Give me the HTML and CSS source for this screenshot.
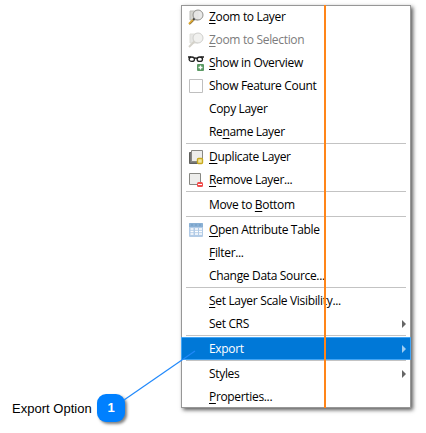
FILE: index.html
```html
<!DOCTYPE html>
<html lang="en">
<head>
<meta charset="utf-8">
<title>Layer menu</title>
<link rel="stylesheet" href="styles.css">
</head>
<body>
<main class="scene">
  <div class="callout">
    <span class="caption">Export Option</span>
    <span class="badge">1</span>
  </div>
  <nav class="menu">
    <div class="item"><svg class="icon" viewBox="0 0 16 16"><path d="M2 2h8v9H2z" fill="#d5d5d0" stroke="#bdbdb8"/><circle cx="10" cy="6" r="5" fill="#e7e7e5" fill-opacity=".9" stroke="#92928e"/><path d="M6.5 9.5L5 11" stroke="#444" stroke-width="2"/><path d="M5 11l-4 4" stroke="#dca62c" stroke-width="2.2"/><path d="M5.8 11.5l-4 4" stroke="#665335" stroke-width=".7"/></svg><span class="label"><u>Z</u>oom to Layer</span></div>
    <div class="item disabled"><svg class="icon" viewBox="0 0 16 16"><path d="M2 2h8v9H2z" fill="#e7e7e5" stroke="#deded9"/><circle cx="10" cy="6" r="5" fill="#f1f1ef" stroke="#cfcfcc"/><path d="M6.5 9.5L1 15" stroke="#d4d1c9" stroke-width="2"/></svg><span class="label"><u>Z</u>oom to Selection</span></div>
    <div class="item"><svg class="icon" viewBox="0 0 16 16"><g fill="none" stroke="#222" stroke-width="1.3"><ellipse cx="3.8" cy="4.2" rx="2.7" ry="2.2"/><ellipse cx="11.8" cy="4.2" rx="2.7" ry="2.2"/><path d="M0 2h3M6.5 3.5q1.3-1 2.6 0M12.5 2H16"/></g><rect x="9" y="9" width="7" height="7" rx="1" fill="#5b9a64"/><path d="M12.5 10.5v4M10.5 12.5h4" stroke="#fff" stroke-width="1.3"/></svg><span class="label"><u>S</u>how in Overview</span></div>
    <div class="item"><svg class="icon" viewBox="0 0 16 16"><path d="M1.5 1.5h13v13h-13z" fill="#fff" stroke="#bfbfbf"/></svg><span class="label">Show Feature Count</span></div>
    <div class="item"><span class="icon"></span><span class="label">Copy Layer</span></div>
    <div class="item"><span class="icon"></span><span class="label">Re<u>n</u>ame Layer</span></div>
    <div class="separator"></div>
    <div class="item"><svg class="icon" viewBox="0 0 16 16"><path d="M1.5 3.5h10v11h-10z" fill="#777" stroke="#60605c"/><path d="M3.5 1.5h11v11h-11z" fill="#ededeb" stroke="#888883"/><rect x="9.5" y="9.5" width="5" height="5" rx="1" fill="#f2e79e" stroke="#c8a920" stroke-width="1.4"/></svg><span class="label"><u>D</u>uplicate Layer</span></div>
    <div class="item"><svg class="icon" viewBox="0 0 16 16"><path d="M1.5 1.5h11v11h-11z" fill="#ededeb" stroke="#888883"/><rect x="9" y="10" width="6" height="5" rx="1.5" fill="#f04c4c"/><path d="M10 12.5h4" stroke="#fff"/></svg><span class="label"><u>R</u>emove Layer...</span></div>
    <div class="separator"></div>
    <div class="item"><span class="icon"></span><span class="label">Move to <u>B</u>ottom</span></div>
    <div class="separator"></div>
    <div class="item"><svg class="icon" viewBox="0 0 16 16"><rect x="1" y="1" width="14" height="14" rx="1" fill="#b2cbe6"/><path d="M1 2q0-1 1-1h12q1 0 1 1v3H1z" fill="#8ab0d4"/><path d="M3 3h2M7 3h2M11 3h2" stroke="#6e9ac4"/><path d="M2.5 7h3M2.5 9.5h3M2.5 12h3M7 7h3M7 9.5h3M7 12h3M11 7h3M11 9.5h3M11 12h3" stroke="#fff" stroke-width="1.3"/></svg><span class="label"><u>O</u>pen Attribute Table</span></div>
    <div class="item"><span class="icon"></span><span class="label"><u>F</u>ilter...</span></div>
    <div class="item"><span class="icon"></span><span class="label">Change Data Source...</span></div>
    <div class="separator"></div>
    <div class="item"><span class="icon"></span><span class="label"><u>S</u>et Layer Scale Visibility...</span></div>
    <div class="item"><span class="icon"></span><span class="label">Set CRS</span><span class="arrow"></span></div>
    <div class="separator"></div>
    <div class="item selected"><span class="icon"></span><span class="label">Export</span><span class="arrow"></span></div>
    <div class="separator"></div>
    <div class="item"><span class="icon"></span><span class="label">Styles</span><span class="arrow"></span></div>
    <div class="item"><span class="icon"></span><span class="label"><u>P</u>roperties...</span></div>
    <div class="guide"></div>
  </nav>
  <svg class="connector" viewBox="0 0 426 433"><path d="M124 400L195 351" stroke="#2189fb" stroke-width="1.2"/></svg>
</main>
</body>
</html>
```
FILE: styles.css
```css
body { margin: 0; background: #fff; }
.scene {
  position: relative;
  display: flex;
  width: 426px;
  height: 433px;
  overflow: hidden;
}
.callout {
  display: flex;
  align-items: center;
  align-self: flex-end;
  box-sizing: border-box;
  width: 181px;
  height: 28px;
  margin-bottom: 11px;
  padding-left: 12px;
  font-family: "Liberation Sans", Arial, sans-serif;
}
.caption {
  width: 85px;
  font-size: 13px;
  letter-spacing: 0.02px;
  white-space: nowrap;
  color: #000;
}
.badge {
  width: 28px;
  height: 28px;
  border-radius: 9px;
  background: #0080ff;
  box-shadow: 2px 2px 3px rgba(0, 0, 0, .5);
  color: #fff;
  font-size: 13px;
  font-weight: bold;
  line-height: 28px;
  text-align: center;
}
.menu {
  position: relative;
  width: 230px;
  height: 403px;
  margin-top: 5px;
  background: #fff;
  box-shadow: inset 0 0 0 1px #979797, 2px 2px 4px rgba(0, 0, 0, .65);
  font-family: "Open Sans", "Noto Sans", sans-serif;
  font-size: 12px;
  letter-spacing: -0.33px;
  color: #000;
}
.item {
  display: flex;
  align-items: center;
  box-sizing: border-box;
  height: 23px;
  padding: 0 5px 0 7px;
}
.icon { flex: none; width: 16px; height: 16px; margin-right: 5px; }
.label { flex: 1; line-height: 23px; white-space: nowrap; }
.label u { text-underline-offset: 2px; text-decoration-thickness: 1px; text-decoration-skip-ink: none; }
.disabled { color: #7c7c7c; }
.selected { background: #0078d7; box-shadow: inset 0 0 0 1px #42a5f5; color: #fff; }
.separator {
  box-sizing: border-box;
  height: 2px;
  margin: 0 5px;
  border-top: 1px solid #c3c3c3;
}
.arrow {
  border: solid transparent;
  border-width: 4px 0 4px 4px;
  border-left-color: #666;
}
.selected .arrow { border-left-color: #9fcdf2; }
.guide {
  position: absolute;
  top: 0;
  left: 143px;
  width: 2px;
  height: 403px;
  background: #ff8519;
}
.connector { position: absolute; inset: 0; width: 426px; height: 433px; }
```
